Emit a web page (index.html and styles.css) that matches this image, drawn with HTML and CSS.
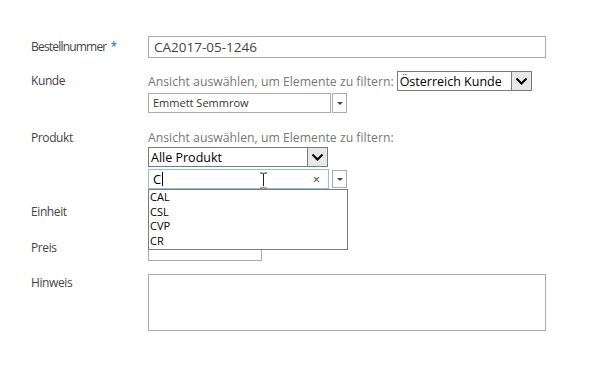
FILE: index.html
```html
<!DOCTYPE html>
<html lang="de">
<head>
    <meta charset="UTF-8">
    <title>Bestellung</title>
    <link rel="stylesheet" href="styles.css">
</head>
<body>
    <div class="form">
        <div class="row row-first">
            <div class="label label-long">Bestellnummer<span class="req">*</span></div>
            <div class="field">
                <div class="textbox wide">CA2017-05-1246</div>
            </div>
        </div>

        <div class="row row-kunde">
            <div class="label">Kunde</div>
            <div class="field">
                <div class="filter-line">
                    <span class="hint">Ansicht auswählen, um Elemente zu filtern:</span>
                    <div class="select select-kunde">
                        <span class="select-text">Österreich Kunde</span>
                        <span class="select-btn"><svg width="13" height="9" viewBox="0 0 13 9"><path d="M1.5 1.5 L6.5 6.5 L11.5 1.5" fill="none" stroke="#000" stroke-width="2"/></svg></span>
                    </div>
                </div>
                <div class="combo">
                    <div class="combo-box">Emmett Semmrow</div>
                    <div class="combo-btn"><span class="tri"></span></div>
                </div>
            </div>
        </div>

        <div class="row row-produkt">
            <div class="label">Produkt</div>
            <div class="field">
                <div class="hint hint-block">Ansicht auswählen, um Elemente zu filtern:</div>
                <div class="select select-produkt">
                    <span class="select-text">Alle Produkt</span>
                    <span class="select-btn"><svg width="13" height="9" viewBox="0 0 13 9"><path d="M1.5 1.5 L6.5 6.5 L11.5 1.5" fill="none" stroke="#000" stroke-width="2"/></svg></span>
                </div>
                <div class="combo combo-active">
                    <div class="combo-input">
                        <span class="typed">C</span><span class="caret"></span>
                        <span class="clear">×</span>
                        <svg class="ibeam" width="9" height="17" viewBox="0 0 9 17">
                            <path d="M1 1 H3.5 L4.5 2 L5.5 1 H8 M4.5 2 V14" fill="none" stroke="#222" stroke-width="1"/>
                            <path d="M1 16 H3.5 L4.5 15 L5.5 16 H8" fill="none" stroke="#a0522d" stroke-width="1"/>
                        </svg>
                    </div>
                    <div class="combo-btn"><span class="tri"></span></div>
                    <ul class="dropdown">
                        <li>CAL</li>
                        <li>CSL</li>
                        <li>CVP</li>
                        <li>CR</li>
                    </ul>
                </div>
            </div>
        </div>

        <div class="row row-einheit">
            <div class="label">Einheit</div>
            <div class="field">
                <div class="textbox narrow"></div>
            </div>
        </div>

        <div class="row row-preis">
            <div class="label">Preis</div>
            <div class="field">
                <div class="textbox narrow"></div>
            </div>
        </div>

        <div class="row row-hinweis">
            <div class="label">Hinweis</div>
            <div class="field">
                <div class="textarea"></div>
            </div>
        </div>
    </div>
</body>
</html>
```

FILE: styles.css
```css
body {
    margin: 0;
    padding: 0;
    background-color: #fff;
    font-family: "Open Sans", "Noto Sans", sans-serif;
    color: #444;
}
.form {
    padding: 36px 0 0 31px;
}
.row {
    display: grid;
    grid-template-columns: 117px 398px;
    align-items: start;
}
.label {
    font-size: 12px;
    letter-spacing: -0.4px;
    line-height: 20px;
    color: #444;
}
.label-long {
    letter-spacing: -0.8px;
}
.req {
    color: #0072c6;
    margin-left: 4px;
}
.row-first .label {
    padding-top: 1px;
}
.textbox {
    box-sizing: border-box;
    height: 22px;
    border: 1px solid #ababab;
    font-size: 13.5px;
    line-height: 20px;
    padding: 0 5px;
    color: #444;
}
.textbox.wide {
    width: 398px;
}
.textbox.narrow {
    width: 114px;
    height: 21px;
}
.row-kunde {
    margin-top: 13px;
}
.filter-line {
    display: flex;
    align-items: center;
    height: 20px;
}
.hint {
    font-size: 12.25px;
    color: #777;
    white-space: nowrap;
}
.hint-block {
    line-height: 18px;
}
.select {
    box-sizing: border-box;
    display: flex;
    align-items: stretch;
    height: 20px;
    border: 1px solid #7a7a7a;
    background-color: #fff;
    color: #000;
    font-size: 12.5px;
}
.select-kunde {
    width: 135px;
    margin-left: 3px;
}
.select-produkt {
    width: 180px;
}
.select-text {
    flex: 1;
    line-height: 19px;
    padding-left: 2px;
    white-space: nowrap;
}
.select-btn {
    width: 19px;
    border-left: 1px solid #7a7a7a;
    background-color: #e8e8e8;
    display: flex;
    align-items: center;
    justify-content: center;
}
.combo {
    display: flex;
    position: relative;
    margin-top: 2px;
    width: 199px;
}
.combo-box {
    box-sizing: border-box;
    width: 183px;
    height: 20px;
    border: 1px solid #ababab;
    font-size: 11px;
    line-height: 18px;
    padding-left: 4px;
    color: #333;
}
.combo-btn {
    box-sizing: border-box;
    width: 15px;
    height: 20px;
    margin-left: 1px;
    border: 1px solid #ababab;
    background-color: #fdfdfd;
    display: flex;
    align-items: center;
    justify-content: center;
}
.tri {
    width: 0;
    height: 0;
    border-left: 3px solid transparent;
    border-right: 3px solid transparent;
    border-top: 3px solid #444;
}
.combo-active .combo-btn {
    margin-left: 3px;
    height: 18px;
    margin-top: 1px;
}
.combo-input {
    box-sizing: border-box;
    position: relative;
    width: 184px;
    height: 20px;
    border: 1px solid #92c0e0;
    display: flex;
    align-items: center;
    padding-left: 4px;
    font-size: 13px;
    color: #000;
}
.caret {
    width: 1px;
    height: 14px;
    background-color: #000;
    margin-left: 1px;
}
.clear {
    margin-left: auto;
    margin-right: 8px;
    font-size: 13px;
    color: #444;
}
.ibeam {
    position: absolute;
    left: 110px;
    top: 2px;
}
.dropdown {
    position: absolute;
    top: 20px;
    left: 0;
    box-sizing: border-box;
    width: 200px;
    height: 61px;
    margin: 0;
    padding: 0 0 0 1px;
    list-style: none;
    background-color: #fff;
    border: 1px solid #7a7a7a;
    font-size: 11px;
    line-height: 14.5px;
    color: #000;
}
.row-produkt {
    margin-top: 16px;
}
.row-produkt .label {
    line-height: 18px;
}
.row-einheit {
    margin-top: 13px;
    height: 22px;
}
.row-preis {
    margin-top: 16px;
}
.row-preis .label {
    margin-top: -2px;
}
.row-hinweis {
    margin-top: 13px;
}
.row-hinweis .label {
    margin-top: -1px;
}
.textarea {
    box-sizing: border-box;
    width: 398px;
    height: 57px;
    border: 1px solid #ababab;
}
```
